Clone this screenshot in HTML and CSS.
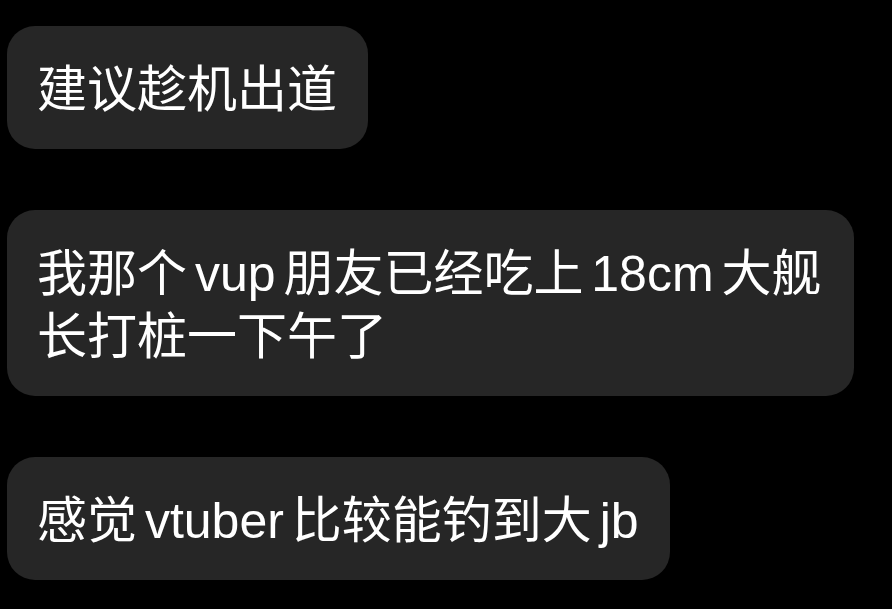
FILE: index.html
```html
<!DOCTYPE html>
<html lang="zh-CN">
<head>
    <meta charset="UTF-8">
    <title>Chat</title>
    <link rel="stylesheet" href="styles.css">
</head>
<body>
    <div class="chat">
        <div class="bubble">建议趁机出道</div>
        <div class="bubble">我那个 vup 朋友已经吃上 18cm 大舰长打桩一下午了</div>
        <div class="bubble">感觉 vtuber 比较能钓到大 jb</div>
    </div>
</body>
</html>
```

FILE: styles.css
```css
body {
    margin: 0;
    background-color: #000;
    color: #fff;
    font-family: "Liberation Sans", "Noto Sans CJK SC", sans-serif;
    height: 100vh;
    overflow: hidden;
}

.chat {
    display: flex;
    flex-direction: column;
    align-items: flex-start;
    gap: 61px;
    padding: 26px 0 0 7px;
}

.bubble {
    background-color: #262626;
    border-radius: 28px;
    padding: 33px 31px 27px 30px;
    font-size: 50px;
    line-height: 63px;
    word-spacing: -6px;
    max-width: 786px;
}
```
